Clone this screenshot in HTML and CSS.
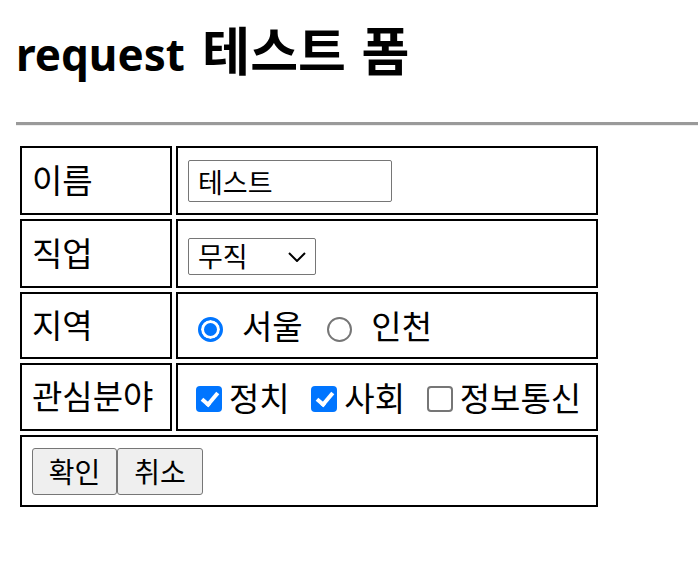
FILE: index.html
```html
<!DOCTYPE html>
<html lang="ko">
<head>
    <meta charset="UTF-8">
    <meta name="viewport" content="width=device-width, initial-scale=1.0">
    <title>request 테스트 폼</title>
    <link rel="stylesheet" href="styles.css">
</head>
<body>
    <h1 class="title">request <span class="title-ko">테스트 폼</span></h1>
    <hr class="divider">
    <form class="form" action="#" method="post">
        <table class="form-table">
            <tr class="row row-name">
                <td class="label">이름</td>
                <td class="field"><input class="text-input" type="text" name="name" value="테스트"></td>
            </tr>
            <tr class="row row-job">
                <td class="label">직업</td>
                <td class="field">
                    <span class="select-wrap">
                        <select class="select" name="job">
                            <option>무직</option>
                            <option>학생</option>
                            <option>회사원</option>
                        </select>
                        <svg class="chevron" width="18" height="10" viewBox="0 0 18 10"><path d="M1 1 L9 9 L17 1" fill="none" stroke="#000" stroke-width="2"/></svg>
                    </span>
                </td>
            </tr>
            <tr class="row row-area">
                <td class="label">지역</td>
                <td class="field">
                    <label class="radio"><input type="radio" name="area" value="seoul" checked><span>서울</span></label>
                    <label class="radio"><input type="radio" name="area" value="incheon"><span>인천</span></label>
                </td>
            </tr>
            <tr class="row row-interest">
                <td class="label">관심분야</td>
                <td class="field">
                    <label class="check"><input type="checkbox" name="hobby" value="politics" checked><span>정치</span></label>
                    <label class="check"><input type="checkbox" name="hobby" value="society" checked><span>사회</span></label>
                    <label class="check"><input type="checkbox" name="hobby" value="it"><span>정보통신</span></label>
                </td>
            </tr>
            <tr class="row row-buttons">
                <td class="field buttons" colspan="2">
                    <input class="btn" type="submit" value="확인"><input class="btn" type="reset" value="취소">
                </td>
            </tr>
        </table>
    </form>
</body>
</html>
```

FILE: styles.css
```css
body {
    margin: 0 0 0 16px;
    font-family: "Noto Sans", "Noto Sans CJK KR", sans-serif;
    color: #000;
    background-color: #fff;
}
.title {
    margin: 0;
    padding-top: 23px;
    height: 57px;
    font-size: 44px;
    line-height: 56px;
    font-weight: 700;
}
.title-ko {
    font-size: 52px;
    margin-left: 6px;
    word-spacing: 2px;
}
.divider {
    margin: 42px 0 16px 0;
    height: 0;
    border: none;
    border-top: 3px solid #9a9a9a;
    border-bottom: 1px solid #eeeeee;
}
.form {
    margin: 0;
}
.form-table {
    border-spacing: 4px;
    margin-left: 0;
}
.form-table td {
    border: 2px solid #000;
    padding: 0 10px;
    font-size: 33px;
    line-height: 38px;
    white-space: nowrap;
}
.label {
    width: 128px;
}
.field {
    width: 398px;
}
.row-name td,
.row-job td {
    height: 65px;
}
.row-area td {
    height: 63px;
}
.row-interest td {
    height: 64px;
}
.row-buttons td {
    height: 68px;
}
.text-input {
    box-sizing: border-box;
    width: 204px;
    height: 42px;
    margin: 0;
    padding: 0 9px;
    border: 1px solid #767676;
    border-radius: 2px;
    font-family: inherit;
    font-size: 27px;
    vertical-align: middle;
}
.select-wrap {
    position: relative;
    display: inline-block;
    vertical-align: middle;
    margin-top: 3px;
}
.select {
    box-sizing: border-box;
    width: 128px;
    height: 37px;
    margin: 0;
    padding: 0 0 0 9px;
    border: 1px solid #767676;
    border-radius: 2px;
    background-color: #fff;
    font-family: inherit;
    font-size: 27px;
    line-height: 35px;
    appearance: none;
    -webkit-appearance: none;
    display: block;
}
.chevron {
    position: absolute;
    right: 10px;
    top: 14px;
    pointer-events: none;
}
.radio,
.check {
    display: inline-flex;
    align-items: center;
    vertical-align: middle;
}
.radio input {
    appearance: none;
    -webkit-appearance: none;
    box-sizing: border-box;
    flex: none;
    width: 25px;
    height: 25px;
    margin: 5px 19px 0 10px;
    border: 2px solid #767676;
    border-radius: 50%;
    background-color: #fff;
}
.radio input:checked {
    border: 3px solid #0075ff;
    background-color: #0075ff;
    box-shadow: inset 0 0 0 3px #fff;
}
.radio + .radio input {
    margin-left: 16px;
}
.check input {
    appearance: none;
    -webkit-appearance: none;
    box-sizing: border-box;
    position: relative;
    flex: none;
    width: 26px;
    height: 26px;
    margin: 0 7px 0 8px;
    border: 2px solid #767676;
    border-radius: 4px;
    background-color: #fff;
}
.check input:checked {
    border: none;
    background-color: #0075ff;
}
.check input:checked::after {
    content: "";
    position: absolute;
    left: 9px;
    top: 3px;
    width: 6px;
    height: 13px;
    border-right: 4px solid #fff;
    border-bottom: 4px solid #fff;
    transform: rotate(40deg);
}
.check + .check input {
    margin-left: 13px;
}
.buttons {
    font-size: 0;
}
.btn {
    box-sizing: border-box;
    width: 85px;
    height: 47px;
    margin: 0;
    padding: 0;
    border: 1px solid #767676;
    border-radius: 3px;
    background-color: #efefef;
    font-family: inherit;
    font-size: 28px;
    vertical-align: middle;
}
.btn + .btn {
    width: 86px;
}
```
